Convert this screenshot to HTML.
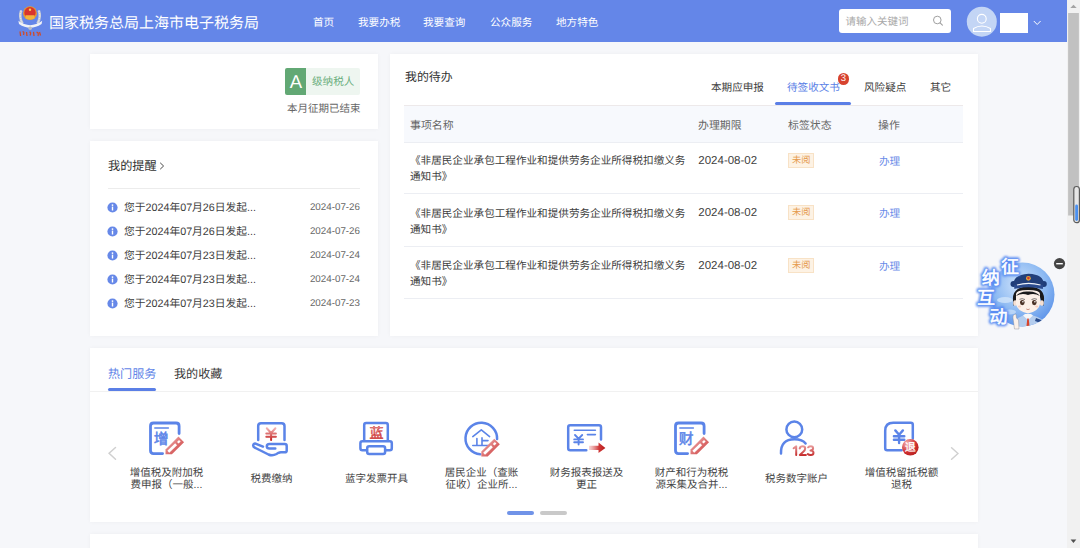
<!DOCTYPE html>
<html lang="zh-CN">
<head>
<meta charset="utf-8">
<style>
*{margin:0;padding:0;box-sizing:border-box;}
html,body{width:1080px;height:548px;overflow:hidden;}
body{background:#f6f7fa;font-family:"Liberation Sans",sans-serif;text-rendering:geometricPrecision;color:#333;position:relative;}
.abs{position:absolute;}
.t{position:absolute;white-space:nowrap;}
#hdr{position:absolute;left:0;top:0;width:1067px;height:42px;background:#6486e8;}
.title{left:49px;top:14px;font-size:15px;line-height:20px;color:#fff;}
.nav{top:14.5px;font-size:10.6px;line-height:16px;color:#fff;}
.search{position:absolute;left:839px;top:9px;width:112px;height:24px;background:#fff;border-radius:3px;}
.card{position:absolute;background:#fff;box-shadow:0 0 4px rgba(0,0,0,0.04);}
.tab{font-size:10.6px;line-height:14px;color:#404040;}
.th{font-size:10.9px;line-height:14px;color:#666;}
.td{font-size:10.6px;line-height:16.4px;color:#404040;white-space:normal;}
.dt{font-size:11.5px;line-height:14px;color:#404040;}
.rt{font-size:10.75px;line-height:14px;color:#404040;}
.rd{font-size:9.8px;line-height:14px;color:#666;width:60px;text-align:right;}
.tag{position:absolute;width:25.6px;height:15px;background:#fdf2e4;border:1px solid #f8e2c6;font-size:9.2px;line-height:13px;color:#e59a4c;text-align:center;}
.lbl{font-size:10.5px;line-height:12.2px;color:#444;text-align:center;width:90px;white-space:normal;}
</style>
</head>
<body>
<div id="hdr">
<svg class="abs" style="left:17px;top:4px" width="28" height="36" viewBox="0 0 28 36">
<path d="M4.2 6.5 Q1.8 13 5.5 19.5" stroke="#c9ced8" stroke-width="2.6" fill="none"/>
<path d="M21.8 6.5 Q24.2 13 20.5 19.5" stroke="#c9ced8" stroke-width="2.6" fill="none"/>
<path d="M4.2 6.5 Q1.8 13 5.5 19.5 M21.8 6.5 Q24.2 13 20.5 19.5" stroke="#eef0f4" stroke-width="1" stroke-dasharray="1.2 1.3" fill="none"/>
<path d="M1.4 16.8 Q13 25.5 25.2 16.8 L24.6 20 Q13 27.5 2 20 Z" fill="#f0f2f6"/>
<circle cx="13.2" cy="24.3" r="1.8" fill="#b8bdc6"/>
<circle cx="13" cy="9.2" r="6.9" fill="#e89a2c"/>
<circle cx="13" cy="8.8" r="5.7" fill="#d9342c"/>
<path d="M8.5 11.2 L17.5 11.2 L17.5 14.8 Q13 16.2 8.5 14.8 Z" fill="#f2b53c"/>
<circle cx="13" cy="5.8" r="1.2" fill="#f6d24c"/>
<path d="M3 27.5 L3.6 32 M5.5 28 Q7.5 27 6.5 31 M9.5 28 L10 32 M12.5 28 Q14.5 28.5 13 31.5 M16.5 27.8 L17 32 M19.5 28.5 Q22 28 21 32 M22.5 28 L23.5 31.5" stroke="#d04a2a" stroke-width="1.3" fill="none"/>
</svg>
<div class="t title">国家税务总局上海市电子税务局</div>
<div class="t nav" style="left:313px">首页</div>
<div class="t nav" style="left:358px">我要办税</div>
<div class="t nav" style="left:423px">我要查询</div>
<div class="t nav" style="left:490px">公众服务</div>
<div class="t nav" style="left:556px">地方特色</div>
<div class="search"><div class="t" style="left:6.5px;top:6px;font-size:10.5px;line-height:14px;color:#a9a9a9;">请输入关键词</div>
<svg class="abs" style="left:93px;top:5px" width="14" height="14" viewBox="0 0 14 14"><circle cx="5.3" cy="6" r="3.8" stroke="#a0a0a0" stroke-width="1" fill="none"/><path d="M8.1 8.8 L10.4 11.1" stroke="#a0a0a0" stroke-width="1.1" stroke-linecap="round"/></svg>
</div>
<svg class="abs" style="left:966px;top:6px" width="32" height="32" viewBox="0 0 32 32">
<circle cx="15.8" cy="15.7" r="15" fill="#c3d5f5"/>
<circle cx="15.8" cy="12.8" r="4.4" stroke="#fff" stroke-width="1.1" fill="none"/>
<path d="M7.5 25.5 L7.5 22.5 Q15.8 17.6 24.5 22.5 L24.5 25.5 Z" stroke="#fff" stroke-width="1.1" fill="none" stroke-linejoin="round"/>
</svg>
<div class="abs" style="left:1000px;top:13.3px;width:28px;height:20px;background:#fff;"></div>
<svg class="abs" style="left:1032px;top:19px" width="10" height="8" viewBox="0 0 10 8"><path d="M1.8 2 L5.2 5.5 L8.6 2" stroke="#fff" stroke-width="1" fill="none"/></svg>
</div>
<div class="card" style="left:90px;top:54px;width:288px;height:75px;">
<div class="abs" style="left:195.3px;top:14.1px;width:21px;height:26.7px;background:#62a874;border-radius:2px 0 0 2px;"></div>
<div class="t" style="left:195.3px;top:14px;width:21px;height:27px;color:#fff;font-size:18.5px;line-height:27px;text-align:center;">A</div>
<div class="abs" style="left:216.3px;top:14.1px;width:53.7px;height:26.7px;background:#eef6f0;border-radius:0 2px 2px 0;"></div>
<div class="t" style="left:222px;top:21.3px;font-size:10.6px;line-height:14px;color:#6aae7c;">级纳税人</div>
<div class="t" style="left:197px;top:47.5px;font-size:10.5px;line-height:14px;color:#666;">本月征期已结束</div>
</div>
<div class="card" style="left:90px;top:141px;width:288px;height:195px;">
<div class="t" style="left:18px;top:16.4px;font-size:12.2px;line-height:18px;color:#333;">我的提醒</div>
<svg class="abs" style="left:68px;top:19.6px" width="8" height="10" viewBox="0 0 8 10"><path d="M2.2 1.8 L5.6 5 L2.2 8.2" stroke="#4a4a4a" stroke-width="1" fill="none"/></svg>
<div class="abs" style="left:18px;top:47px;width:252px;height:1px;background:#ececec;"></div>
<svg class="abs" style="left:17px;top:61.00px" width="11" height="11" viewBox="0 0 11 11"><circle cx="5.5" cy="5.5" r="5.1" fill="#6688e8"/><circle cx="5.5" cy="3.1" r="0.9" fill="#fff"/><rect x="4.8" y="4.6" width="1.4" height="3.9" fill="#fff"/></svg>
<div class="t rt" style="left:34px;top:59.50px;">您于2024年07月26日发起...</div>
<div class="t rd" style="left:210px;top:60.00px;">2024-07-26</div>
<svg class="abs" style="left:17px;top:85.05px" width="11" height="11" viewBox="0 0 11 11"><circle cx="5.5" cy="5.5" r="5.1" fill="#6688e8"/><circle cx="5.5" cy="3.1" r="0.9" fill="#fff"/><rect x="4.8" y="4.6" width="1.4" height="3.9" fill="#fff"/></svg>
<div class="t rt" style="left:34px;top:83.55px;">您于2024年07月26日发起...</div>
<div class="t rd" style="left:210px;top:84.05px;">2024-07-26</div>
<svg class="abs" style="left:17px;top:109.10px" width="11" height="11" viewBox="0 0 11 11"><circle cx="5.5" cy="5.5" r="5.1" fill="#6688e8"/><circle cx="5.5" cy="3.1" r="0.9" fill="#fff"/><rect x="4.8" y="4.6" width="1.4" height="3.9" fill="#fff"/></svg>
<div class="t rt" style="left:34px;top:107.60px;">您于2024年07月23日发起...</div>
<div class="t rd" style="left:210px;top:108.10px;">2024-07-24</div>
<svg class="abs" style="left:17px;top:133.15px" width="11" height="11" viewBox="0 0 11 11"><circle cx="5.5" cy="5.5" r="5.1" fill="#6688e8"/><circle cx="5.5" cy="3.1" r="0.9" fill="#fff"/><rect x="4.8" y="4.6" width="1.4" height="3.9" fill="#fff"/></svg>
<div class="t rt" style="left:34px;top:131.65px;">您于2024年07月23日发起...</div>
<div class="t rd" style="left:210px;top:132.15px;">2024-07-24</div>
<svg class="abs" style="left:17px;top:157.20px" width="11" height="11" viewBox="0 0 11 11"><circle cx="5.5" cy="5.5" r="5.1" fill="#6688e8"/><circle cx="5.5" cy="3.1" r="0.9" fill="#fff"/><rect x="4.8" y="4.6" width="1.4" height="3.9" fill="#fff"/></svg>
<div class="t rt" style="left:34px;top:155.70px;">您于2024年07月23日发起...</div>
<div class="t rd" style="left:210px;top:156.20px;">2024-07-23</div>
</div>
<div class="card" style="left:390px;top:54px;width:588px;height:282px;">
<div class="t" style="left:15px;top:14.2px;font-size:11.9px;line-height:18px;color:#333;">我的待办</div>
<div class="t tab" style="left:321px;top:27.3px;">本期应申报</div>
<div class="t tab" style="left:397px;top:27.3px;color:#5b7fe6;">待签收文书</div>
<div class="abs" style="left:447.6px;top:19px;width:11.5px;height:11.5px;border-radius:50%;background:#d7432f;"></div>
<div class="t" style="left:447.6px;top:19px;width:11.5px;font-size:9.5px;line-height:11.5px;text-align:center;color:#fff;">3</div>
<div class="abs" style="left:385.2px;top:48.1px;width:76.3px;height:2.7px;border-radius:2px;background:#5b7fe6;"></div>
<div class="t tab" style="left:474px;top:27.3px;">风险疑点</div>
<div class="t tab" style="left:540px;top:27.3px;">其它</div>
<div class="abs" style="left:14px;top:51px;width:559px;height:37.5px;background:#f7f9fd;border-top:1px solid #ede9ea;border-bottom:1px solid #eceef3;"></div>
<div class="t th" style="left:20px;top:65px;">事项名称</div>
<div class="t th" style="left:308px;top:65px;">办理期限</div>
<div class="t th" style="left:398px;top:65px;">标签状态</div>
<div class="t th" style="left:488px;top:65px;">操作</div>
<div class="t td" style="left:20px;top:99.0px;width:282px;">《非居民企业承包工程作业和提供劳务企业所得税扣缴义务通知书》</div>
<div class="t dt" style="left:308.3px;top:99.9px;">2024-08-02</div>
<div class="tag" style="left:398.4px;top:98.8px;">未阅</div>
<div class="t td" style="left:489px;top:99.5px;color:#6a8be8;white-space:nowrap;">办理</div>
<div class="abs" style="left:14px;top:139.0px;width:559px;height:1px;background:#eceef3;"></div>
<div class="t td" style="left:20px;top:151.5px;width:282px;">《非居民企业承包工程作业和提供劳务企业所得税扣缴义务通知书》</div>
<div class="t dt" style="left:308.3px;top:152.4px;">2024-08-02</div>
<div class="tag" style="left:398.4px;top:151.3px;">未阅</div>
<div class="t td" style="left:489px;top:152.0px;color:#6a8be8;white-space:nowrap;">办理</div>
<div class="abs" style="left:14px;top:191.5px;width:559px;height:1px;background:#eceef3;"></div>
<div class="t td" style="left:20px;top:204.0px;width:282px;">《非居民企业承包工程作业和提供劳务企业所得税扣缴义务通知书》</div>
<div class="t dt" style="left:308.3px;top:204.9px;">2024-08-02</div>
<div class="tag" style="left:398.4px;top:203.8px;">未阅</div>
<div class="t td" style="left:489px;top:204.5px;color:#6a8be8;white-space:nowrap;">办理</div>
<div class="abs" style="left:14px;top:244.0px;width:559px;height:1px;background:#eceef3;"></div>
</div>
<div class="card" style="left:90px;top:348px;width:888px;height:174px;">
<div class="t" style="left:18px;top:16.9px;font-size:12.1px;line-height:18px;color:#6386e8;">热门服务</div>
<div class="t" style="left:84px;top:16.9px;font-size:12.1px;line-height:18px;color:#383838;">我的收藏</div>
<div class="abs" style="left:18px;top:40px;width:47.5px;height:2.7px;border-radius:2px;background:#5b7fe6;"></div>
<div class="abs" style="left:0;top:42.5px;width:888px;height:1px;background:#f1f1f1;"></div>
<svg class="abs" style="left:17px;top:97px" width="12" height="16" viewBox="0 0 12 16"><path d="M8.5 2.5 L2.1 8.3 L8.5 14.2" stroke="#d0d0d0" stroke-width="1.5" fill="none" stroke-linecap="round"/></svg>
<svg class="abs" style="left:857px;top:97px" width="12" height="16" viewBox="0 0 12 16"><path d="M4.6 2.7 L11 8.5 L4.6 14.3" stroke="#d0d0d0" stroke-width="1.5" fill="none" stroke-linecap="round"/></svg>
<div class="abs" style="left:416.7px;top:163.2px;width:26.9px;height:3.4px;border-radius:2px;background:#7093e8;"></div>
<div class="abs" style="left:449.8px;top:163.2px;width:26.8px;height:3.4px;border-radius:2px;background:#c9c9c9;"></div>
<div class="t lbl" style="left:31.5px;top:119.0px;">增值税及附加税<br>费申报（一般...</div>
<div class="t lbl" style="left:136.5px;top:125.1px;">税费缴纳</div>
<div class="t lbl" style="left:241.5px;top:125.1px;">蓝字发票开具</div>
<div class="t lbl" style="left:346.5px;top:119.0px;">居民企业（查账<br>征收）企业所...</div>
<div class="t lbl" style="left:451.5px;top:119.0px;">财务报表报送及<br>更正</div>
<div class="t lbl" style="left:556.5px;top:119.0px;">财产和行为税税<br>源采集及合并...</div>
<div class="t lbl" style="left:661.5px;top:125.1px;">税务数字账户</div>
<div class="t lbl" style="left:766.5px;top:119.0px;">增值税留抵税额<br>退税</div>
</div>
<div class="card" style="left:90px;top:534px;width:888px;height:30px;"></div>
<svg class="abs" style="left:0;top:0" width="1080" height="548" viewBox="0 0 1080 548"><defs>
<linearGradient id="pg" x1="0" y1="0" x2="1" y2="1"><stop offset="0" stop-color="#f4c8c8"/><stop offset="0.45" stop-color="#e07c7c"/><stop offset="1" stop-color="#c83434"/></linearGradient>
<linearGradient id="rg" x1="0" y1="1" x2="0" y2="0"><stop offset="0" stop-color="#c42424"/><stop offset="1" stop-color="#f2b0b0"/></linearGradient>
<linearGradient id="ag" x1="0" y1="0" x2="1" y2="0"><stop offset="0" stop-color="#f0b0b0" stop-opacity="0.5"/><stop offset="0.6" stop-color="#d03a3a"/><stop offset="1" stop-color="#b81818"/></linearGradient>
<linearGradient id="ng" gradientUnits="userSpaceOnUse" x1="0" y1="445" x2="0" y2="456"><stop offset="0" stop-color="#eba4a4"/><stop offset="1" stop-color="#c42828"/></linearGradient>
<radialGradient id="cg" cx="0.3" cy="0.25" r="0.9"><stop offset="0" stop-color="#f4b0b0"/><stop offset="0.6" stop-color="#d03030"/><stop offset="1" stop-color="#b01c1c"/></radialGradient>
</defs><path d="M179.1 433.6 L179.1 426 Q179.1 423 176.1 423 L153.5 423 Q150.5 423 150.5 426 L150.5 450.6 Q150.5 453.6 153.5 453.6 L162.6 453.6" stroke="#5b84e8" stroke-width="2.8" fill="none" stroke-linecap="round"/>
<path d="M154.8 427.9 L168.4 427.9" stroke="#5b84e8" stroke-width="1.5" stroke-linecap="round"/>
<text x="161.1" y="443.6" font-size="14.8" fill="#5b84e8" stroke="#5b84e8" stroke-width="0.5" text-anchor="middle">增</text>
<g transform="translate(165.5,454.3)">
<path d="M0 0 L0 -4.8 L12.96 -17.74 L18.54 -12.16 L6.4 0 Z" fill="url(#pg)"/>
<path d="M2.8 -2.6 L10.6 -10.1" stroke="#fff" stroke-width="2.7" stroke-linecap="butt"/>
<path d="M12.3 -11.6 L14.3 -13.6" stroke="#fff" stroke-width="2.3"/>
</g>
<path d="M704.1 433.6 L704.1 426 Q704.1 423 701.1 423 L678.5 423 Q675.5 423 675.5 426 L675.5 450.6 Q675.5 453.6 678.5 453.6 L687.6 453.6" stroke="#5b84e8" stroke-width="2.8" fill="none" stroke-linecap="round"/>
<path d="M679.8 427.9 L693.4 427.9" stroke="#5b84e8" stroke-width="1.5" stroke-linecap="round"/>
<text x="686.1" y="443.6" font-size="14.8" fill="#5b84e8" stroke="#5b84e8" stroke-width="0.5" text-anchor="middle">财</text>
<g transform="translate(690.5,454.3)">
<path d="M0 0 L0 -4.8 L12.96 -17.74 L18.54 -12.16 L6.4 0 Z" fill="url(#pg)"/>
<path d="M2.8 -2.6 L10.6 -10.1" stroke="#fff" stroke-width="2.7" stroke-linecap="butt"/>
<path d="M12.3 -11.6 L14.3 -13.6" stroke="#fff" stroke-width="2.3"/>
</g>
<path d="M258.2 440 L258.2 426 Q258.2 423.2 261 423.2 L281.7 423.2 Q284.5 423.2 284.5 426 L284.5 440" stroke="#5b84e8" stroke-width="2.5" fill="none" stroke-linecap="round"/>
<path d="M266.8 428.3 L271.1 433 L275.4 428.3 M266.3 433.6 L275.9 433.6 M266.3 436.8 L275.9 436.8 M271.1 433 L271.1 440" stroke="url(#rg)" stroke-width="2" fill="none" stroke-linecap="round"/>
<path d="M263 446.6 L256 443.8 Q253.5 443 253.2 445.5 Q253 447 255.5 448 L268.5 454.5 Q272.5 456.2 276.5 454 L278.5 452.8 Q279.5 452.3 281 452.3 L284.8 452.3 Q286.7 452.3 286.7 450.4 L286.7 446 Q286.7 444.1 284.8 444.1 L269.5 444.1 Q266.8 444.1 266.8 446.35 Q266.8 448.6 269.5 448.6 L275.3 448.6" stroke="#5b84e8" stroke-width="2.5" fill="none" stroke-linecap="round" stroke-linejoin="round"/>
<path d="M364.2 441 L364.2 425 Q364.2 423 366.2 423 L385.8 423 Q387.8 423 387.8 425 L387.8 441" stroke="#5b84e8" stroke-width="2.5" fill="none"/>
<rect x="360.4" y="441.2" width="31.4" height="9" rx="2" stroke="#5b84e8" stroke-width="2.5" fill="#fff"/>
<rect x="367.2" y="446.3" width="17.9" height="7.7" rx="2" stroke="#5b84e8" stroke-width="2.5" fill="#fff"/>
<text x="376.5" y="437.8" font-size="14" fill="url(#rg)" stroke="#d04040" stroke-width="0.45" text-anchor="middle">蓝</text>
<path d="M497.09 439.05 A15.8 15.8 0 1 0 480.20 454.26" stroke="#5b84e8" stroke-width="2.5" fill="none" stroke-linecap="round"/>
<path d="M472.8 436.6 L481.3 429.9 L489.6 436.6 M476.9 438.6 L476.9 445.4 M482 437.9 L482 445.4 M482 440.6 L488 440.6 M472.8 445.5 L489.6 445.5" stroke="#5b84e8" stroke-width="1.6" fill="none" stroke-linecap="round" stroke-linejoin="round"/>
<g transform="translate(481.3,456.4)">
<path d="M0 0 L0 -4.8 L12.96 -17.74 L18.54 -12.16 L6.4 0 Z" fill="url(#pg)"/>
<path d="M2.8 -2.6 L10.6 -10.1" stroke="#fff" stroke-width="2.7" stroke-linecap="butt"/>
<path d="M12.3 -11.6 L14.3 -13.6" stroke="#fff" stroke-width="2.3"/>
</g>
<path d="M601 439.6 L601 427.2 Q601 425.2 599 425.2 L570.2 425.2 Q568.2 425.2 568.2 427.2 L568.2 448.2 Q568.2 450.2 570.2 450.2 L586.3 450.2" stroke="#5b84e8" stroke-width="2.5" fill="none" stroke-linecap="round"/>
<path d="M574.3 430.3 L595.4 430.3 M587.4 434.6 L595.4 434.6" stroke="#5b84e8" stroke-width="1.6" stroke-linecap="round"/>
<path d="M575 435 L578.6 438.6 L582.2 435 M574.2 439.4 L583 439.4 M574.2 442.2 L583 442.2 M578.6 438.6 L578.6 444.6" stroke="#5b84e8" stroke-width="1.9" fill="none" stroke-linecap="round"/>
<path d="M589 445.8 L598.5 445.8 L598.5 442.6 L605.4 447.9 L598.5 453 L598.5 450 L589 450 Z" fill="url(#ag)"/>
<circle cx="794.3" cy="429.4" r="7.9" stroke="#5b84e8" stroke-width="2.5" fill="none"/>
<path d="M781 453.5 Q780.5 439.5 794.5 439.3 Q802.5 439.3 805.6 443.5" stroke="#5b84e8" stroke-width="2.5" fill="none" stroke-linecap="round"/>
<path d="M793.6 448.2 L796.2 446.4 L796.2 455 M799.7 448.4 Q800.2 446.3 802.6 446.3 Q805.2 446.3 805.2 448.6 Q805.2 450.3 803 452.1 L799.8 454.9 L805.9 454.9 M808.1 447.3 Q809 446.3 810.9 446.3 Q813.1 446.3 813.1 448.3 Q813.1 450.4 810.5 450.5 Q813.5 450.6 813.5 452.8 Q813.5 455.1 810.7 455.1 Q808.8 455.1 807.8 454" stroke="url(#ng)" stroke-width="2" fill="none" stroke-linecap="round" stroke-linejoin="round"/>
<path d="M912.8 438.6 L912.8 424.7 Q912.8 422.7 910.8 422.7 L893.2 422.7 Q885.2 422.7 885.2 430.7 L885.2 448.2 Q885.2 450.2 887.2 450.2 L901.6 450.2" stroke="#5b84e8" stroke-width="2.5" fill="none" stroke-linecap="round"/>
<path d="M895.3 430.4 L899.1 434.7 L902.9 430.4 M893.9 436.2 L904.3 436.2 M893.9 439.7 L904.3 439.7 M899.1 434.7 L899.1 443" stroke="#5b84e8" stroke-width="2.4" fill="none" stroke-linecap="round"/>
<circle cx="910.3" cy="447.3" r="8.3" fill="url(#cg)"/>
<text x="910.3" y="451.4" font-size="11" fill="#fff" stroke="#fff" stroke-width="0.3" text-anchor="middle">退</text></svg>
<svg class="abs" style="left:970px;top:250px" width="100" height="85" viewBox="970 250 100 85">
<defs>
<radialGradient id="wb" cx="0.45" cy="0.35" r="0.75"><stop offset="0" stop-color="#cfe3fb"/><stop offset="0.55" stop-color="#8cb9f2"/><stop offset="1" stop-color="#4d86e6"/></radialGradient>
<filter id="gl" x="-50%" y="-50%" width="200%" height="200%"><feGaussianBlur stdDeviation="1.3"/></filter>
</defs>
<circle cx="1022.5" cy="294.5" r="32" fill="url(#wb)"/>
<ellipse cx="1005" cy="300" rx="8" ry="3" fill="#d9e9fb" opacity="0.7"/>
<ellipse cx="1010" cy="312" rx="6" ry="2.5" fill="#d9e9fb" opacity="0.6"/>
<clipPath id="wc"><circle cx="1022.5" cy="294.5" r="32"/></clipPath>
<g clip-path="url(#wc)">
<!-- shirt -->
<path d="M1013 329 Q1015 318 1023 315.5 L1033 315.5 Q1043 318 1047 325 L1042 330 L1016 330 Z" fill="#b4cdee"/>
<path d="M1036 318 L1044 321 L1043 324 L1035 321 Z" fill="#2a4c8c"/>
<path d="M1023 315.5 L1028 320 L1033 315.5 L1031 314 L1025 314 Z" fill="#f4f6fa"/>
<path d="M1027.3 318.5 L1028.7 318.5 L1029.6 327 L1028 328.5 L1026.4 327 Z" fill="#d9442a"/>
</g>
<!-- hair -->
<path d="M1013 300 Q1012 287 1028.5 286.5 Q1045 287 1044 300 L1043.5 306 Q1041 302 1040 297 L1017 297 Q1016 302 1013.5 306 Z" fill="#1a1a1c"/>
<!-- ears -->
<ellipse cx="1015.2" cy="303" rx="2" ry="2.8" fill="#f6e0d2"/>
<ellipse cx="1041.8" cy="303" rx="2" ry="2.8" fill="#f6e0d2"/>
<!-- face -->
<path d="M1016 294 Q1016 290 1028 290 Q1040 290 1040 294 L1040 304 Q1039 311 1028 313.5 Q1017 311 1016 304 Z" fill="#fcf0e8"/>
<path d="M1016 296 Q1020 291 1028 291.5 Q1036 291 1040 296 Q1034 292.5 1028 295 Q1022 292.5 1016 296 Z" fill="#1a1a1c"/>
<ellipse cx="1022.3" cy="302.6" rx="2.3" ry="2.6" fill="#4a3226"/>
<ellipse cx="1034.3" cy="302.6" rx="2.3" ry="2.6" fill="#4a3226"/>
<circle cx="1022.9" cy="301.8" r="0.8" fill="#fff"/>
<circle cx="1034.9" cy="301.8" r="0.8" fill="#fff"/>
<path d="M1019.5 299.3 Q1022 298 1025 299.5 M1031.5 299.5 Q1034.5 298 1037 299.3" stroke="#222" stroke-width="0.6" fill="none"/>
<ellipse cx="1019.6" cy="306.5" rx="1.6" ry="0.9" fill="#f6c6b4" opacity="0.8"/>
<ellipse cx="1036.8" cy="306.5" rx="1.6" ry="0.9" fill="#f6c6b4" opacity="0.8"/>
<path d="M1026.3 309 Q1028 310.3 1029.7 309" stroke="#b86b5a" stroke-width="0.7" fill="none"/>
<!-- hat -->
<circle cx="1013.5" cy="284" r="3" fill="#1e3c78"/>
<circle cx="1043.8" cy="284" r="3" fill="#1e3c78"/>
<path d="M1013.5 286.5 Q1012 274.5 1028.6 273.8 Q1045.2 274.5 1043.8 286.5 Q1028.6 283 1013.5 286.5 Z" fill="#223f7a"/>
<path d="M1014 285.2 Q1028.6 281.2 1043.2 285.2 L1042.8 289 Q1028.6 285.6 1014.4 289 Z" fill="#2b4b8e"/>
<path d="M1017 285 Q1028.6 281.8 1040.5 285" stroke="#eef2f9" stroke-width="1.1" fill="none"/>
<circle cx="1028.4" cy="278.3" r="2.4" fill="#e6a93a"/>
<circle cx="1028.4" cy="278.1" r="1.3" fill="#d2392c"/>
<!-- hand -->
<path d="M1014.5 329 L1013 318 Q1012.5 315 1014.5 314.5 L1016 314 L1016.5 318 L1018.5 320 L1019 329 Z" fill="#fbf1ea" stroke="#7a8090" stroke-width="0.4"/>
<!-- text glow -->
<g font-size="18" fill="#5a8cf2" stroke="#5a8cf2" stroke-width="4" stroke-linejoin="round" filter="url(#gl)" font-family="Liberation Sans">
<text x="1001" y="273">征</text><text x="981.8" y="284">纳</text><text x="977" y="304">互</text><text x="989.6" y="323">动</text>
</g>
<g font-size="18" fill="#fff" stroke="#fff" stroke-width="0.5" font-family="Liberation Sans">
<text x="1001" y="273">征</text><text x="981.8" y="284">纳</text><text x="977" y="304">互</text><text x="989.6" y="323">动</text>
</g>
<circle cx="1059.5" cy="263.6" r="5.6" fill="#454545"/>
<rect x="1056.2" y="263" width="6.6" height="1.4" fill="#fff"/>
</svg>
<div class="abs" style="left:1067px;top:0;width:13px;height:548px;background:#f1f1f1;"></div>
<svg class="abs" style="left:1067px;top:0" width="13" height="548" viewBox="0 0 13 548">
<path d="M3.3 8 L6.5 4.8 L9.7 8 Z" fill="#a3a3a3"/>
<rect x="1.1" y="13" width="10.8" height="202.5" fill="#c1c1c1"/>
<path d="M3.6 539.5 L9.3 539.5 L6.45 543 Z" fill="#505050"/>
<rect x="6.8" y="186.5" width="5.6" height="36.2" rx="2.8" fill="#e6e6e6" stroke="#5a5a5a" stroke-width="1.2"/>
<rect x="8.2" y="204.5" width="2.8" height="16.5" rx="1.4" fill="#4a90f0"/>
</svg>
</body>
</html>
